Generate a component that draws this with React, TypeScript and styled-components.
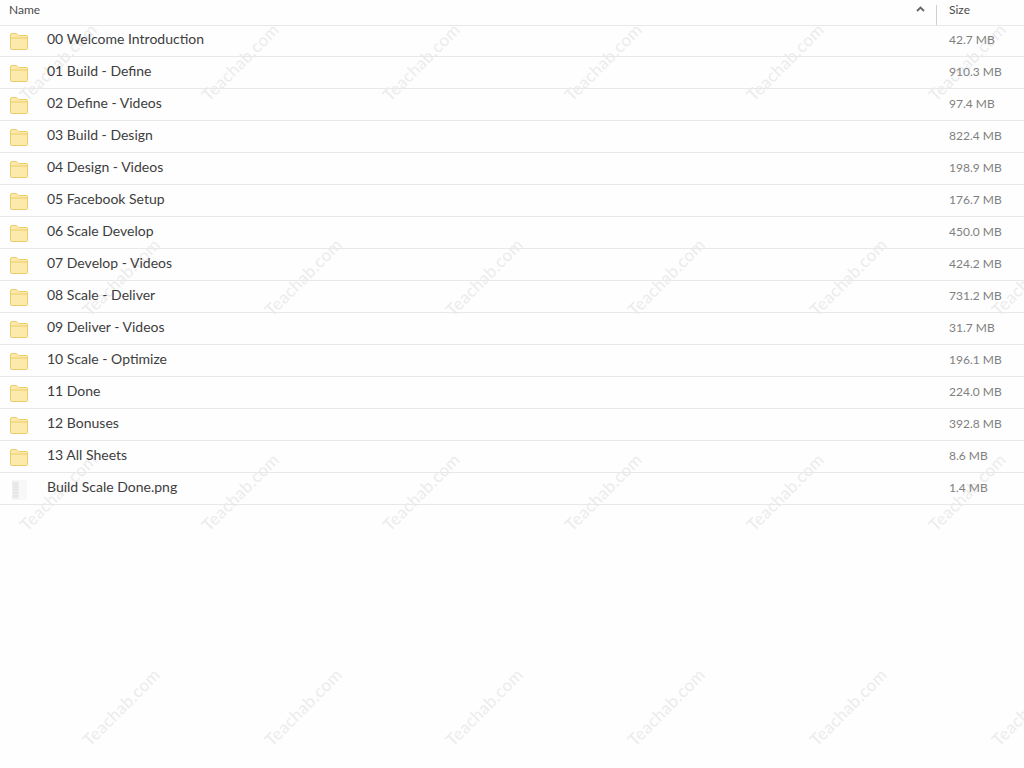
import React from 'react';
import styled, { createGlobalStyle } from 'styled-components';

const GlobalStyle = createGlobalStyle`
  html, body {
    margin: 0;
    padding: 0;
    background: #fefefe;
  }
  body {
    font-family: Lato, "Open Sans", sans-serif;
    overflow: hidden;
  }
`;

const Page = styled.div`
  position: relative;
  width: 1024px;
  height: 768px;
  overflow: hidden;
`;

const List = styled.div`
  position: relative;
`;

const HeaderRow = styled.div`
  display: grid;
  grid-template-columns: 936px 1fr;
  height: 25px;
  margin-bottom: -1px;
  border-bottom: 1px solid #e8e8e8;
`;

const NameHead = styled.div`
  display: flex;
  align-items: center;
  justify-content: space-between;
  padding: 0 11px 7px 9px;
  height: 18px;
  font-size: 12px;
  color: #4a4a4a;
`;

const SizeHead = styled.div`
  margin-top: 5px;
  padding: 0 0 0 12px;
  border-left: 1px solid #cfcfcf;
  font-size: 12px;
  line-height: 9px;
  color: #4a4a4a;
`;

const Row = styled.div`
  display: grid;
  grid-template-columns: 47px 902px 1fr;
  align-items: center;
  height: 31px;
  border-bottom: 1px solid #e8e8e8;
`;

const IconCell = styled.div`
  display: flex;
  align-items: center;
  padding: 2px 0 0 10px;
`;

const FileName = styled.div`
  padding-bottom: 4px;
  font-size: 14px;
  color: #3d3d3d;
`;

const FileSize = styled.div`
  padding-bottom: 2px;
  font-size: 12px;
  color: #808080;
`;

const Watermark = styled.div<{ $x: number; $y: number }>`
  position: absolute;
  left: ${(p) => p.$x}px;
  top: ${(p) => p.$y}px;
  transform: translate(-50%, -50%) rotate(-45deg);
  font-size: 17px;
  letter-spacing: 0.4px;
  color: #ececec;
  white-space: nowrap;
  pointer-events: none;
`;

const FolderIcon = () => (
  <svg width="18" height="17" viewBox="0 0 18 17">
    <path d="M0.5 2 Q0.5 0.5 2 0.5 H6.5 L8.5 2.5 H16.5 Q17.5 2.5 17.5 3.5 V15.5 Q17.5 16.5 16.5 16.5 H1.5 Q0.5 16.5 0.5 15.5 Z" fill="#fbeaac" stroke="#e9cd68" />
    <path d="M1 5 H17" stroke="#e9cd68" />
  </svg>
);

const ImageIcon = () => (
  <svg width="17" height="20" viewBox="0 0 17 20">
    <rect x="2" y="0" width="15" height="20" fill="#f8f8f8" />
    <rect x="2" y="1" width="7" height="18" fill="#eeeeee" />
    <path d="M3 4 H8 M3 7 H8 M3 10 H8 M3 13 H8 M3 16 H8" stroke="#dddddd" />
  </svg>
);

const files = [
  { name: '00 Welcome Introduction', size: '42.7 MB' },
  { name: '01 Build - Define', size: '910.3 MB' },
  { name: '02 Define - Videos', size: '97.4 MB' },
  { name: '03 Build - Design', size: '822.4 MB' },
  { name: '04 Design - Videos', size: '198.9 MB' },
  { name: '05 Facebook Setup', size: '176.7 MB' },
  { name: '06 Scale Develop', size: '450.0 MB' },
  { name: '07 Develop - Videos', size: '424.2 MB' },
  { name: '08 Scale - Deliver', size: '731.2 MB' },
  { name: '09 Deliver - Videos', size: '31.7 MB' },
  { name: '10 Scale - Optimize', size: '196.1 MB' },
  { name: '11 Done', size: '224.0 MB' },
  { name: '12 Bonuses', size: '392.8 MB' },
  { name: '13 All Sheets', size: '8.6 MB' },
  { name: 'Build Scale Done.png', size: '1.4 MB', image: true },
];

const marks: { x: number; y: number }[] = [];
[
  { y: 62, start: 58 },
  { y: 277, start: 121 },
  { y: 492, start: 58 },
  { y: 707, start: 121 },
].forEach(({ y, start }) => {
  for (let i = 0; i < 6; i++) marks.push({ x: start + i * 181.7, y });
});

const App = () => (
  <Page>
    <GlobalStyle />
    {marks.map((m) => (
      <Watermark key={`${m.x}-${m.y}`} $x={m.x} $y={m.y}>
        Teachab.com
      </Watermark>
    ))}
    <List>
      <HeaderRow>
        <NameHead>
          <span>Name</span>
          <svg width="9" height="6" viewBox="0 0 9 6">
            <path d="M1 5 L4.5 1.5 L8 5" fill="none" stroke="#666" strokeWidth="1.8" />
          </svg>
        </NameHead>
        <SizeHead>Size</SizeHead>
      </HeaderRow>
      {files.map((file) => (
        <Row key={file.name}>
          <IconCell>{file.image ? <ImageIcon /> : <FolderIcon />}</IconCell>
          <FileName>{file.name}</FileName>
          <FileSize>{file.size}</FileSize>
        </Row>
      ))}
    </List>
  </Page>
);

export default App;
